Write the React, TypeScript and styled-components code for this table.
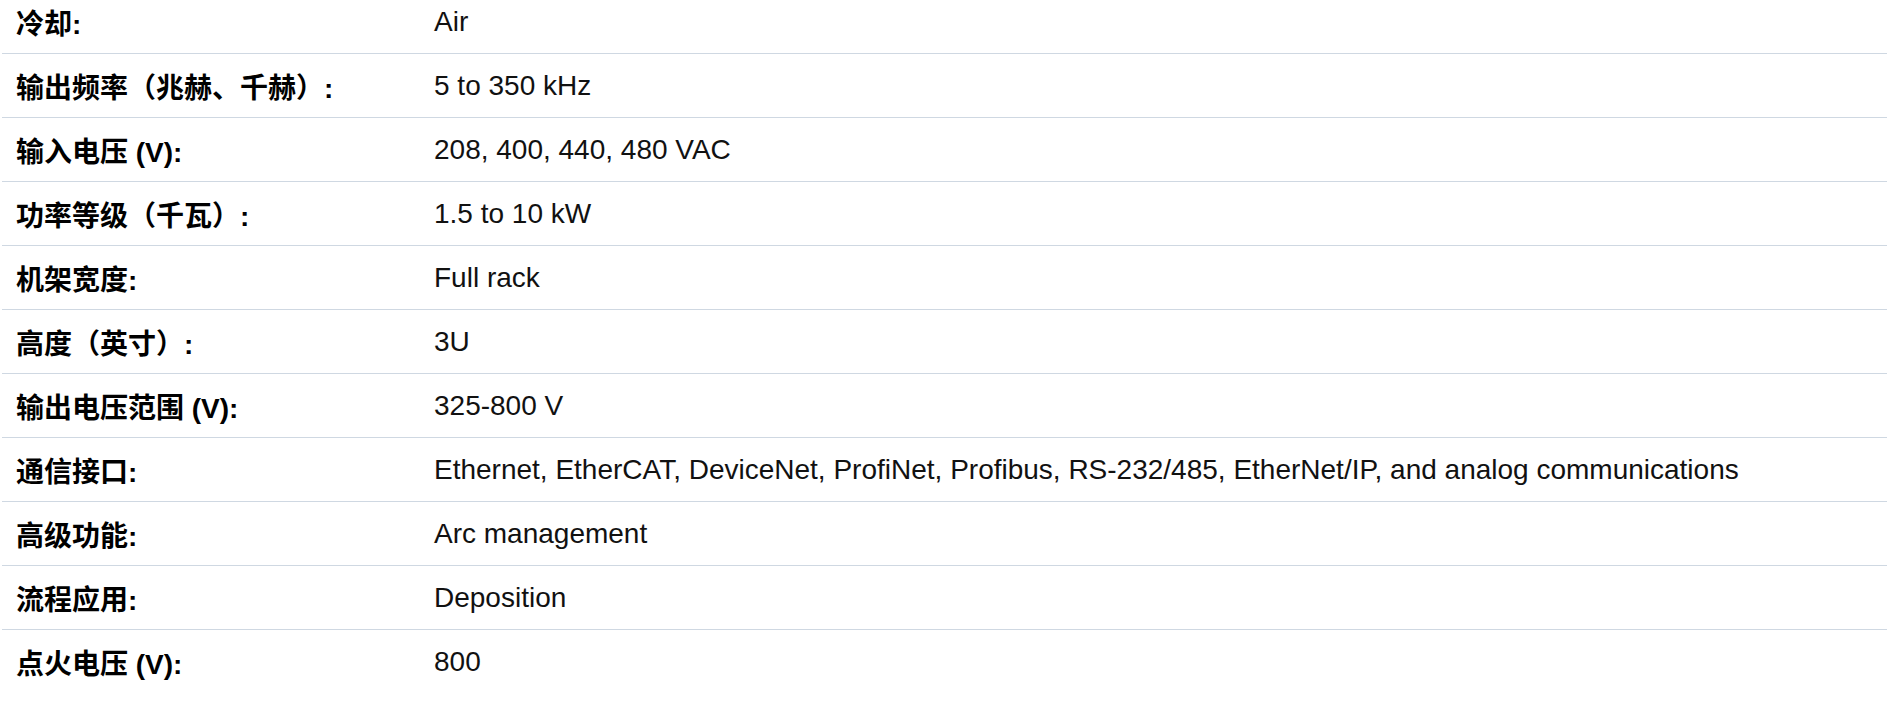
import React from "react";
import styled, { createGlobalStyle } from "styled-components";

const GlobalStyle = createGlobalStyle`
  html, body {
    margin: 0;
    padding: 0;
    background: #ffffff;
  }
  body {
    font-family: "Liberation Sans", Arial, "Noto Sans CJK SC", sans-serif;
    color: #111111;
  }
`;

const Table = styled.div`
  display: flex;
  flex-direction: column;
  margin: -10px 2px 0 2px;
`;

const Row = styled.div<{ $last?: boolean }>`
  display: grid;
  grid-template-columns: 432px 1fr;
  align-items: center;
  height: 64px;
  box-sizing: border-box;
  border-bottom: ${(p) => (p.$last ? "none" : "1px solid #cfd8e2")};
`;

const Label = styled.div`
  padding-left: 14px;
  font-family: "Liberation Sans", Arial, "Noto Sans CJK SC", sans-serif;
  font-weight: 700;
  font-size: 28px;
  color: #000000;
  white-space: nowrap;
`;

const Value = styled.div`
  font-family: "Liberation Sans", Arial, "Noto Sans CJK SC", sans-serif;
  font-weight: 400;
  font-size: 28px;
  color: #111111;
  white-space: nowrap;
`;

const specs: [string, string][] = [
  ["冷却:", "Air"],
  ["输出频率（兆赫、千赫）:", "5 to 350 kHz"],
  ["输入电压 (V):", "208, 400, 440, 480 VAC"],
  ["功率等级（千瓦）:", "1.5 to 10 kW"],
  ["机架宽度:", "Full rack"],
  ["高度（英寸）:", "3U"],
  ["输出电压范围 (V):", "325-800 V"],
  ["通信接口:", "Ethernet, EtherCAT, DeviceNet, ProfiNet, Profibus, RS-232/485, EtherNet/IP, and analog communications"],
  ["高级功能:", "Arc management"],
  ["流程应用:", "Deposition"],
  ["点火电压 (V):", "800"],
];

export default function App() {
  return (
    <>
      <GlobalStyle />
      <Table>
        {specs.map(([k, v], i) => (
          <Row key={k} $last={i === specs.length - 1}>
            <Label>{k}</Label>
            <Value>{v}</Value>
          </Row>
        ))}
      </Table>
    </>
  );
}
